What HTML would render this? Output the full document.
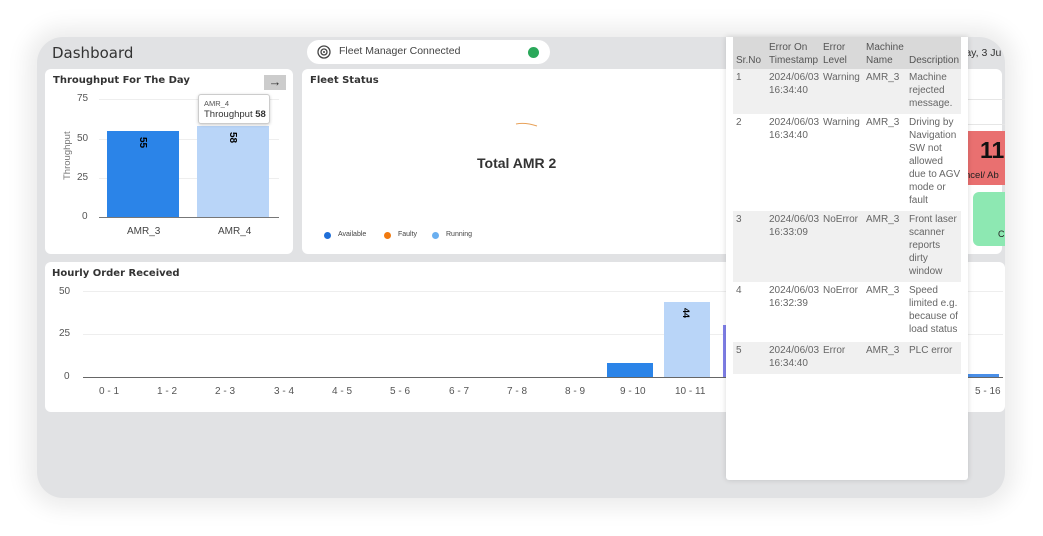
<!DOCTYPE html>
<html><head><meta charset="utf-8"><style>
*{box-sizing:border-box;margin:0;padding:0}
body{width:1043px;height:536px;background:#fff;position:relative;overflow:hidden;font-family:"Liberation Sans",sans-serif;color:#333}
.a{position:absolute}
.frame{left:37px;top:37px;width:968px;height:461px;background:#e1e2e4;border-radius:26px;box-shadow:0 0 22px 10px rgba(0,0,0,0.08);overflow:hidden}
.card{background:#fff;border-radius:6px;position:absolute}
.t{font-family:"DejaVu Sans","Liberation Sans",sans-serif;font-weight:bold;font-size:10px;color:#333;position:absolute}
.ax{font-size:10px;color:#555;position:absolute;white-space:nowrap}
.grid{position:absolute;height:1px;background:#eee}
table{border-collapse:collapse;table-layout:fixed;font-family:"Liberation Sans",sans-serif;font-size:10px;color:#666;line-height:13px}
td,th{vertical-align:top;text-align:left;padding:2px 0 2px 3px;font-weight:normal;overflow:hidden}
th{vertical-align:bottom;color:#555}
.g{background:#f0f0f0}
</style></head><body>
<div class="a frame">
  <div class="a" style="left:15px;top:7px;font-family:'DejaVu Sans',sans-serif;font-size:15px;color:#333">Dashboard</div>
  <div class="a" style="left:270px;top:3px;width:243px;height:24px;background:#fff;border-radius:12px">
    <svg class="a" style="left:10px;top:5px" width="14" height="14" viewBox="0 0 14 14"><circle cx="7" cy="7" r="6" fill="none" stroke="#444" stroke-width="1.3"/><circle cx="7" cy="7" r="3" fill="none" stroke="#444" stroke-width="1.3"/><circle cx="7" cy="7" r="1" fill="#444"/></svg>
    <div class="a" style="left:32px;top:5px;font-family:'Liberation Sans',sans-serif;font-size:10.5px;color:#444">Fleet Manager Connected</div>
    <div class="a" style="left:221px;top:7px;width:11px;height:11px;border-radius:50%;background:#2aa85a"></div>
  </div>
  <div class="a" style="left:926px;top:10px;font-family:'Liberation Sans',sans-serif;font-size:10.5px;color:#333;white-space:nowrap">lay, 3 Ju</div>

  <!-- throughput -->
  <div class="card" style="left:8px;top:32px;width:248px;height:185px">
    <div class="t" style="left:8px;top:6px">Throughput For The Day</div>
    <div class="a" style="left:219px;top:6px;width:22px;height:15px;background:#ccc;font-size:13px;line-height:13px;text-align:center;color:#333">&#8594;</div>
    <div class="ax" style="left:32px;top:24px">75</div>
    <div class="ax" style="left:32px;top:64px">50</div>
    <div class="ax" style="left:32px;top:103px">25</div>
    <div class="ax" style="left:37px;top:142px">0</div>
    <div class="grid" style="left:54px;top:30px;width:180px"></div>
    <div class="grid" style="left:54px;top:70px;width:180px"></div>
    <div class="grid" style="left:54px;top:109px;width:180px"></div>
    <div class="a" style="left:17px;top:111px;transform:rotate(-90deg);transform-origin:left top;font-size:9.5px;color:#777">Throughput</div>
    <div class="a" style="left:62px;top:62px;width:72px;height:86px;background:#2b84e8"></div>
    <div class="a" style="left:152px;top:57px;width:72px;height:91px;background:#b9d5f8"></div>
    <div class="a" style="left:92px;top:68px;transform:rotate(90deg);font-size:10px;font-weight:bold;color:#000">55</div>
    <div class="a" style="left:182px;top:63px;transform:rotate(90deg);font-size:10px;font-weight:bold;color:#000">58</div>
    <div class="a" style="left:54px;top:148px;width:180px;height:1px;background:#777"></div>
    <div class="ax" style="left:82px;top:157px;color:#444">AMR_3</div>
    <div class="ax" style="left:173px;top:157px;color:#444">AMR_4</div>
    <div class="a" style="left:153px;top:25px;width:72px;height:30px;background:#fff;border:1px solid #ccc;border-radius:3px;box-shadow:0 1px 3px rgba(0,0,0,.2);padding:3px 5px;font-size:7.5px;color:#555;line-height:11px;white-space:nowrap">AMR_4<br><span style="font-size:9.5px;color:#333">Throughput <b>58</b></span></div>
  </div>

  <!-- fleet status -->
  <div class="card" style="left:265px;top:32px;width:700px;height:185px">
    <div class="t" style="left:8px;top:6px">Fleet Status</div>
    <svg class="a" style="left:213px;top:52px" width="24" height="6"><path d="M1 3 Q10 1 22 5" stroke="#e8a25a" stroke-width="1" fill="none"/></svg>
    <div class="a" style="left:175px;top:86px;font-size:14px;font-weight:bold;color:#333">Total AMR 2</div>
    <div class="a" style="left:22px;top:163px;width:7px;height:7px;border-radius:50%;background:#1f6fd8"></div>
    <div class="a" style="left:36px;top:162px;font-size:7px;color:#444">Available</div>
    <div class="a" style="left:82px;top:163px;width:7px;height:7px;border-radius:50%;background:#f07a10"></div>
    <div class="a" style="left:96px;top:162px;font-size:7px;color:#444">Faulty</div>
    <div class="a" style="left:130px;top:163px;width:7px;height:7px;border-radius:50%;background:#6aaff0"></div>
    <div class="a" style="left:144px;top:162px;font-size:7px;color:#444">Running</div>
  </div>
  <div class="a" style="left:930px;top:62px;width:40px;height:1px;background:#e6e6e6"></div>
  <div class="a" style="left:930px;top:87px;width:40px;height:1px;background:#e6e6e6"></div>
  <div class="a" style="left:931px;top:94px;width:40px;height:54px;background:#e97070"></div>
  <div class="a" style="left:943px;top:100px;font-size:23px;font-weight:bold;color:#111">11</div>
  <div class="a" style="left:928px;top:133px;font-size:9.5px;color:#222;white-space:nowrap">ncel/ Ab</div>
  <div class="a" style="left:936px;top:155px;width:40px;height:54px;background:#8de8b2;border-radius:6px"></div>
  <div class="a" style="left:961px;top:192px;font-size:9px;color:#222">C</div>

  <!-- hourly -->
  <div class="card" style="left:8px;top:225px;width:960px;height:150px">
    <div class="t" style="left:7px;top:6px">Hourly Order Received</div>
    <div class="ax" style="left:14px;top:24px">50</div>
    <div class="ax" style="left:14px;top:66px">25</div>
    <div class="ax" style="left:19px;top:109px">0</div>
    <div class="grid" style="left:38px;top:29px;width:920px"></div>
    <div class="grid" style="left:38px;top:72px;width:920px"></div>
    <div class="a" style="left:562px;top:101px;width:46px;height:14px;background:#2b84e8"></div>
    <div class="a" style="left:619px;top:40px;width:46px;height:75px;background:#b9d5f8"></div>
    <div class="a" style="left:678px;top:63px;width:10px;height:52px;background:#8080ea"></div>
    <div class="a" style="left:922px;top:112px;width:32px;height:3px;background:#4a8fe8"></div>
    <div class="a" style="left:636px;top:46px;transform:rotate(90deg);font-size:9px;font-weight:bold;color:#000">44</div>
    <div class="a" style="left:38px;top:115px;width:920px;height:1px;background:#666"></div>
    <div class="ax" style="left:54px;top:124px">0 - 1</div>
    <div class="ax" style="left:112px;top:124px">1 - 2</div>
    <div class="ax" style="left:170px;top:124px">2 - 3</div>
    <div class="ax" style="left:229px;top:124px">3 - 4</div>
    <div class="ax" style="left:287px;top:124px">4 - 5</div>
    <div class="ax" style="left:345px;top:124px">5 - 6</div>
    <div class="ax" style="left:404px;top:124px">6 - 7</div>
    <div class="ax" style="left:462px;top:124px">7 - 8</div>
    <div class="ax" style="left:520px;top:124px">8 - 9</div>
    <div class="ax" style="left:575px;top:124px">9 - 10</div>
    <div class="ax" style="left:630px;top:124px">10 - 11</div>
    <div class="ax" style="left:930px;top:124px">5 - 16</div>
  </div>
</div>

<!-- popup -->
<div class="a" style="left:726px;top:37px;width:242px;height:443px;background:#fff;border-radius:0 0 3px 3px;box-shadow:0 0 6px rgba(0,0,0,0.15);overflow:hidden">
  <table class="a" style="left:7px;top:0;width:228px">
    <colgroup><col style="width:33px"><col style="width:54px"><col style="width:43px"><col style="width:43px"><col style="width:55px"></colgroup>
    <tr style="background:#d9d9d9;height:32px"><th>Sr.No</th><th>Error On Timestamp</th><th>Error Level</th><th>Machine Name</th><th>Description</th></tr>
    <tr class="g" style="height:45px"><td>1</td><td>2024/06/03 16:34:40</td><td>Warning</td><td>AMR_3</td><td>Machine rejected message.</td></tr>
    <tr style="height:97px"><td>2</td><td>2024/06/03 16:34:40</td><td>Warning</td><td>AMR_3</td><td>Driving by Navigation SW not allowed due to AGV mode or fault</td></tr>
    <tr class="g" style="height:71px"><td>3</td><td>2024/06/03 16:33:09</td><td>NoError</td><td>AMR_3</td><td>Front laser scanner reports dirty window</td></tr>
    <tr style="height:60px"><td>4</td><td>2024/06/03 16:32:39</td><td>NoError</td><td>AMR_3</td><td>Speed limited e.g. because of load status</td></tr>
    <tr class="g" style="height:32px"><td>5</td><td>2024/06/03 16:34:40</td><td>Error</td><td>AMR_3</td><td>PLC error</td></tr>
  </table>
</div>
</body></html>
